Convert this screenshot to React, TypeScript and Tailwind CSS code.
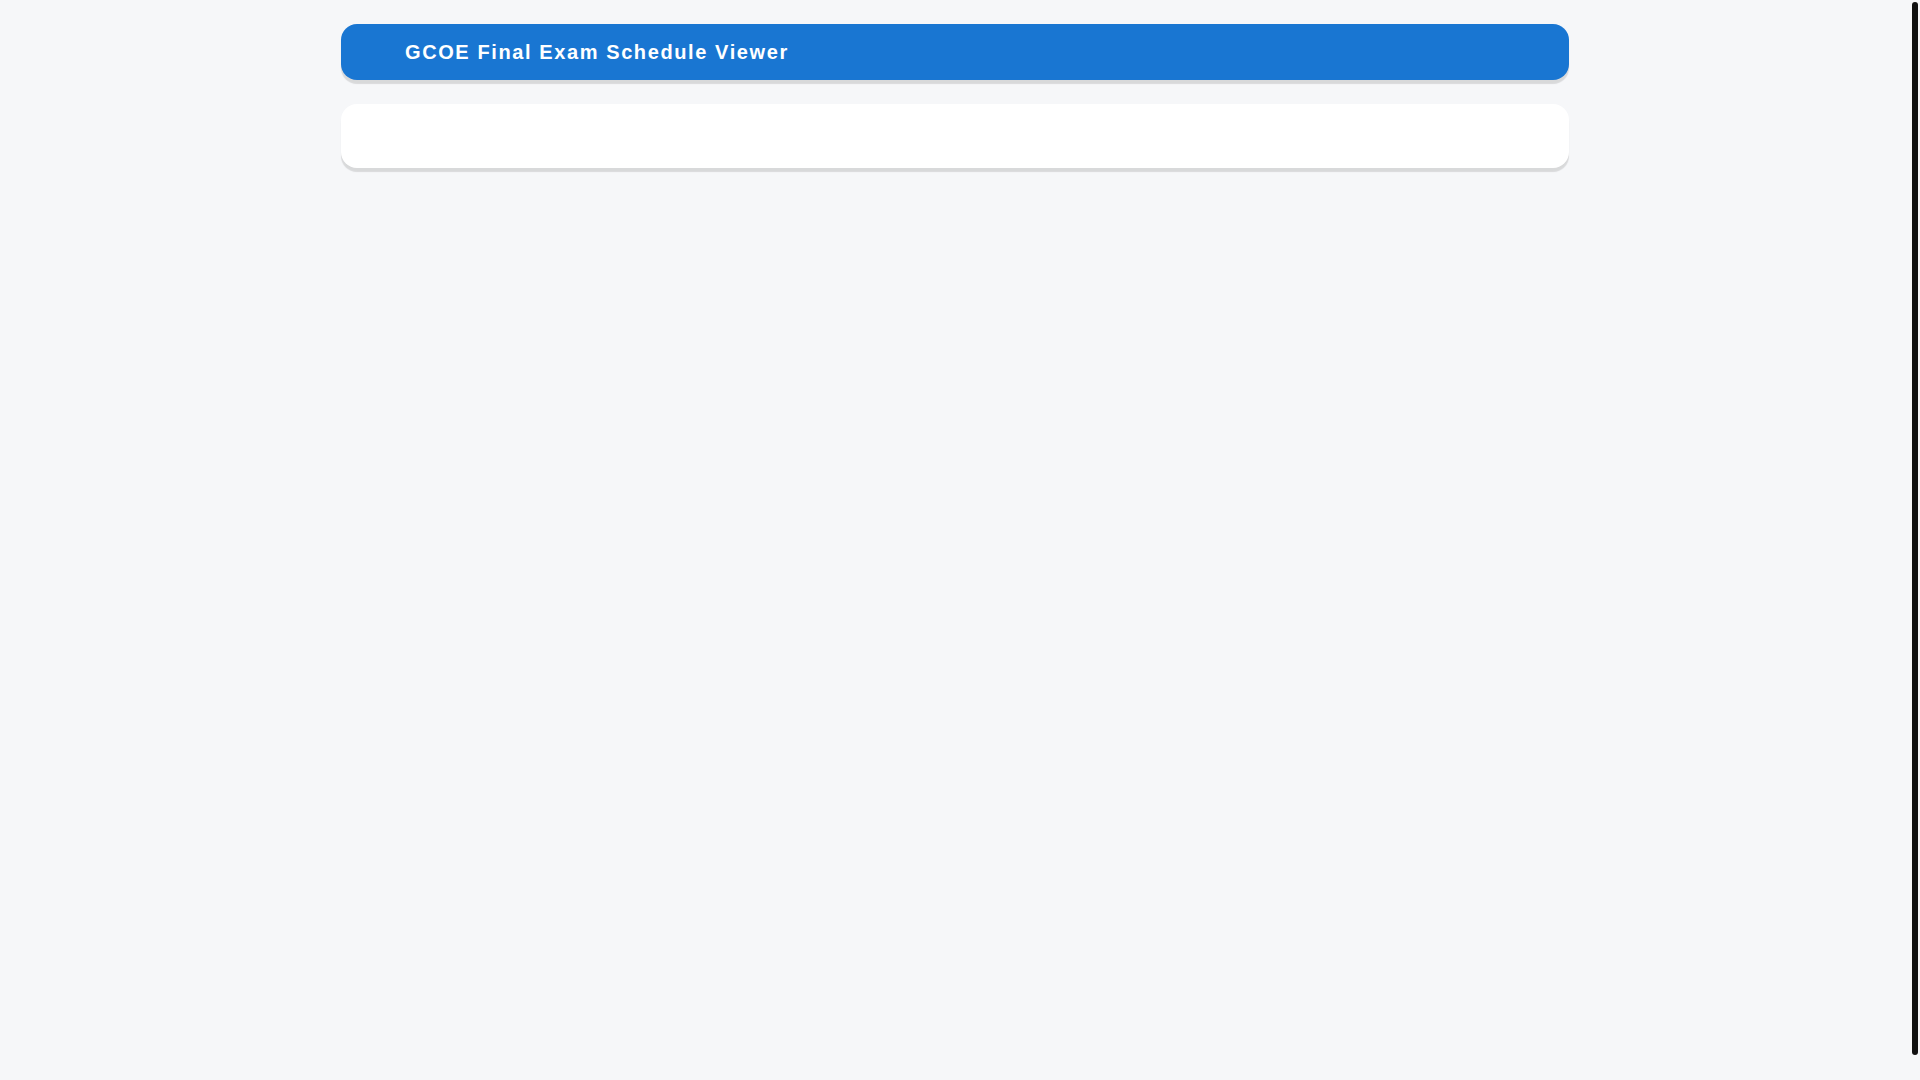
import React from 'react';

const App = () => {
  return (
    <div
      className="flex h-screen overflow-hidden bg-[#f6f7f9]"
      style={{ fontFamily: '"Liberation Sans", Arial, sans-serif' }}
    >
      <main className="flex-1 pt-6">
        <div className="mx-auto flex w-[1228px] flex-col gap-6">
          {/* header bar */}
          <header className="flex h-14 items-center rounded-2xl bg-[#1976d2] pl-16 shadow-[0_4px_1px_rgba(0,0,0,0.12)]">
            <h1 className="text-xl font-bold tracking-[0.08em] text-white">
              GCOE Final Exam Schedule Viewer
            </h1>
          </header>

          {/* empty content card */}
          <section className="h-[64px] rounded-2xl bg-white shadow-[0_4px_1px_rgba(0,0,0,0.12)]"></section>
        </div>
      </main>

      {/* page scrollbar */}
      <aside className="flex w-[10px] justify-center pt-[2px]">
        <div className="h-[1053px] w-[6px] rounded-full bg-[#111111]"></div>
      </aside>
    </div>
  );
};

export default App;
